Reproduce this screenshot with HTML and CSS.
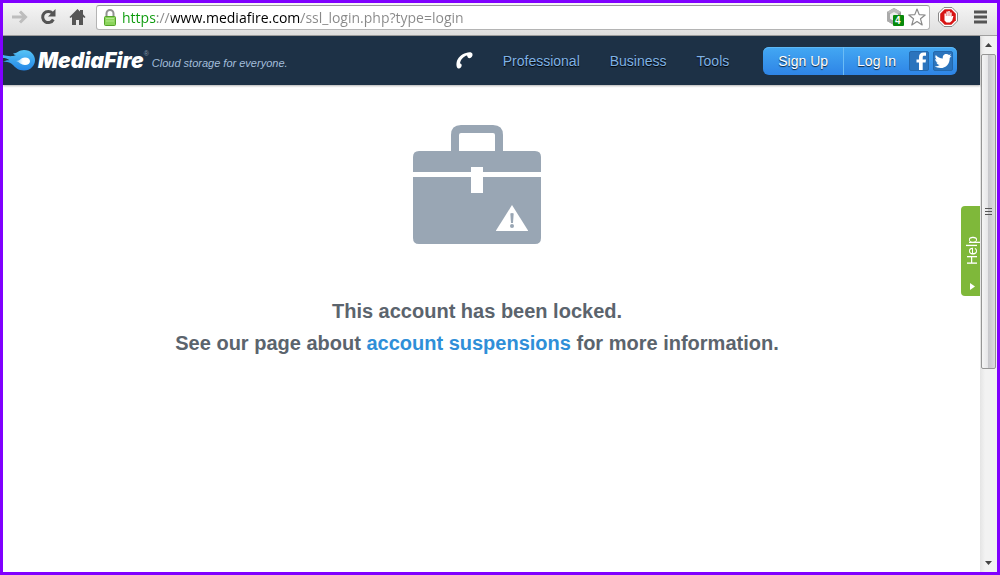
FILE: index.html
```html
<!DOCTYPE html>
<html lang="en">
<head>
  <meta charset="utf-8">
  <title>MediaFire</title>
  <link rel="stylesheet" href="styles.css">
</head>
<body>
  <div class="toolbar">
    <button class="tool" aria-label="Forward">
      <svg width="17" height="16" viewBox="0 0 17 16"><path d="M1 8h13M9 2.500l5.500 5.500L9 13.500" fill="none" stroke="#bdbdbd" stroke-width="3"/></svg>
    </button>
    <button class="tool" aria-label="Reload">
      <svg width="17" height="16" viewBox="0 0 17 16"><path d="M12.500 4.300A5.600 5.600 0 1 0 13.300 10.500" fill="none" stroke="#555" stroke-width="3"/><path d="M15.500 0v7.500H8z" fill="#555"/></svg>
    </button>
    <button class="tool" aria-label="Home">
      <svg width="17" height="16" viewBox="0 0 17 16"><path d="M8.500 0L11 2.400V1h3v4.300L16.500 8l-1 1L14 8v8h-4v-5H7v5H3V8L1.500 9l-1-1z" fill="#555"/></svg>
    </button>
    <div class="omnibox">
      <svg width="12" height="17" viewBox="0 0 12 17"><path d="M2.500 8V4.500a3.500 3.500 0 0 1 7 0V8" fill="none" stroke="#929292" stroke-width="2"/><rect x=".5" y="7.500" width="11" height="9" rx="1" fill="#8bd45c" stroke="#55a32b"/><path d="M2 9.500h8M2 12h8" stroke="#b2e88c"/></svg>
      <input class="url" type="text" aria-label="Address" value="https://www.mediafire.com/ssl_login.php?type=login">
      <button class="tool" aria-label="Site trackers">
        <svg width="18" height="18" viewBox="0 0 18 18"><path d="M8 0l7 4v9l-7 4-7-4V4z" fill="#9a9a9a"/><path d="M8 0l7 4-7 4-7-4z" fill="#bcbcbc"/><path d="M1 4l7 4v9l-7-4z" fill="#aaa"/><path d="M8 4l4 2.300v4.500L8 13l-4-2.200V6.300z" fill="#ededed"/><rect x="7" y="7" width="11" height="11" rx="1" fill="#078a0b"/><text class="count" x="9" y="16">4</text></svg>
      </button>
      <button class="tool" aria-label="Bookmark">
        <svg width="18" height="18" viewBox="0 0 18 18"><path d="M9 1l2.200 5.600 6 .4-4.700 3.800L14.200 17 9 13.500 3.800 17l1.700-6.200L.8 7l6-.4z" fill="#fff" stroke="#8b8b8b" stroke-width="1.200" stroke-linejoin="round"/></svg>
      </button>
    </div>
    <button class="tool blocker" aria-label="Ad blocker">
      <svg width="20" height="20" viewBox="0 0 20 20"><path d="M6 .5h8L19.500 6v8L14 19.500H6L.5 14V6z" fill="#fff" stroke="#888"/><path d="M6.700 2.200h6.600l4.500 4.500v6.600l-4.500 4.500H6.700l-4.500-4.500V6.700z" fill="#d71414"/><path d="M6.500 10V6.500h1.400V9h.5V4.500h1.400V9h.5V4h1.400v5h.5V5.500h1.400V10l.5-1h1.300l-1.200 4.500L12 15.500H8.500l-2-2z" fill="#fff"/></svg>
    </button>
    <button class="tool" aria-label="Menu">
      <svg width="13" height="14" viewBox="0 0 13 14"><path d="M0 2h13M0 7h13M0 12h13" stroke="#555" stroke-width="3"/></svg>
    </button>
  </div>

  <div class="viewport">
    <div class="page">
      <header class="header">
        <a class="logo" href="#">
          <svg width="32" height="22" viewBox="0 0 32 22">
            <defs>
              <linearGradient id="flame" x1="0" y1="0" x2="0" y2="1"><stop offset="0" stop-color="#57c5f6"/><stop offset="1" stop-color="#2285e7"/></linearGradient>
              <linearGradient id="core" x1="0" y1="0" x2="1" y2="0"><stop offset="0" stop-color="#7cc6f8"/><stop offset=".5" stop-color="#fff"/></linearGradient>
            </defs>
            <path d="M0 5c4 1 9 2 13 0-1 0-2-.5-3-1.500C14 3.500 16 0 21 0c7 0 11 5 11 10.200S27.500 20.500 21 20.500c-6 0-8.500-3-11-5.500-3-2.700-6-3.500-10-3 2-1.500 4-2 6.500-1.800C4.500 8.500 2 8 0 8z" fill="url(#flame)"/>
            <path d="M13 11c4 0 5-3.500 9-3.500 3 0 5 1.500 5 3.700S25 15 22 15c-4 0-5.500-3-9-4z" fill="url(#core)"/>
          </svg>
          <span class="brand">MediaFire</span><sup class="reg">®</sup>
          <span class="tagline">Cloud storage for everyone.</span>
        </a>
        <nav class="nav">
          <a href="#" aria-label="Phone">
            <svg width="17" height="17" viewBox="0 0 17 17"><path d="M10 1C13 0 16 0 16.500 2c.4 2-1 4-3 4.200-1.500 0-2-1.200-2.500-2.700C8 4 4.500 7.500 4 11.300c1.200.4 2 1.200 1.600 2.700C5 15.500 4 17 2.500 16.500.5 16 .2 13 .6 10.500 1.400 6 5.500 2 10 1z" fill="#fff"/></svg>
          </a>
          <a href="#">Professional</a>
          <a href="#">Business</a>
          <a href="#">Tools</a>
        </nav>
        <div class="account">
          <button class="signup">Sign Up</button>
          <button class="login">Log In</button>
          <button class="social" aria-label="Log in with Facebook">
            <svg width="18" height="18" viewBox="0 0 18 18"><path d="M9 18v-7.500H6.500v-3H9V5c0-3 1.700-4.500 4.500-4.500H16v3.200h-1.700c-1.200 0-1.600.5-1.600 1.500v2.300H16l-.4 3h-2.900V18z" fill="#fff"/></svg>
          </button>
          <button class="social" aria-label="Log in with Twitter">
            <svg width="18" height="18" viewBox="0 0 18 18"><path d="M17.500 4l-1.800 1.900c.2 5.600-3.700 10.100-9.200 10.100-2.200 0-4.200-.6-5.700-1.700 2 .2 3.500-.3 4.900-1.300-1.500-.1-2.800-1-3.300-2.500h1.500C2.200 10 1.200 8.700 1.200 7l1.500.4C1.300 6.300.9 4.500 1.800 2.900c1.800 2.100 4.200 3.400 7.100 3.600C8.300 4 10 2 12.300 2c1.100 0 2 .4 2.700 1.100l2.100-.8-1.400 1.900z" fill="#fff"/></svg>
          </button>
        </div>
      </header>

      <main class="notice">
        <svg class="briefcase" width="128" height="119" viewBox="0 0 128 119">
          <path d="M38 27V10Q38 0 48 0H80Q90 0 90 10V27H82V10Q82 8 80 8H48Q46 8 46 10V27z" fill="#99a6b4"/>
          <path d="M6 26h116q6 0 6 6v15H70v-5H58v5H0V32q0-6 6-6z" fill="#99a6b4"/>
          <path d="M0 52h58v16h12V52h58v61q0 6-6 6H6q-6 0-6-6z" fill="#99a6b4"/>
          <path d="M99 80l16 25.500v.5H83v-.5z" fill="#fff"/>
          <path d="M97.300 88.500q1.700-1.200 3.400 0L100 98h-2z" fill="#99a6b4"/><circle cx="99" cy="101" r="2" fill="#99a6b4"/>
        </svg>
        <p>This account has been locked.</p>
        <p>See our page about <a href="#">account suspensions</a> for more information.</p>
      </main>

      <button class="help">
        <svg width="6" height="7" viewBox="0 0 6 7"><path d="M6 0v7L1 3.500z" fill="#fff"/></svg>
        Help
      </button>
    </div>

    <div class="scrollbar" aria-hidden="true">
      <div class="arrow"><svg width="7" height="4" viewBox="0 0 7 4"><path d="M0 4L3.500 0 7 4z" fill="#444"/></svg></div>
      <div class="track"><div class="thumb"><svg width="8" height="9" viewBox="0 0 8 9"><path d="M0 1.500h7M0 4.500h7M0 7.500h7" stroke="#555"/></svg></div></div>
      <div class="arrow"><svg width="7" height="4" viewBox="0 0 7 4"><path d="M0 0L3.500 4 7 0z" fill="#444"/></svg></div>
    </div>
  </div>
</body>
</html>
```
FILE: styles.css
```css
* {
  box-sizing: border-box;
}
body {
  display: flex;
  flex-direction: column;
  min-height: 100vh;
  margin: 0;
  border: 3px solid #8000ff;
  font-family: "Liberation Sans", Arial, sans-serif;
  font-size: 14px;
  background: #fff;
}
svg {
  display: block;
  flex: none;
}
button {
  padding: 0;
  border: none;
  background: none;
  font: inherit;
  cursor: pointer;
}
a {
  text-decoration: none;
}

/* browser toolbar */
.toolbar {
  display: flex;
  align-items: center;
  gap: 12px;
  height: 33px;
  padding: 0 10px 4px 8px;
  border-bottom: 1px solid #a0a0a0;
  background: linear-gradient(#f6f6f6, #dedede);
}
.omnibox {
  display: flex;
  flex: 1;
  align-items: center;
  gap: 4px;
  height: 25px;
  margin: 0 -1px 0 -2px;
  padding: 0 3px 0 7px;
  border: 1px solid #b4b4b4;
  border-top-color: #9a9a9a;
  border-radius: 3px;
  background: #fff;
}
.url {
  flex: 1;
  min-width: 0;
  padding: 0 2px;
  border: none;
  outline: none;
  font: 14px "Open Sans", sans-serif;
  color: transparent;
  /* scheme, separator, host, path */
  background: linear-gradient(90deg, #0a9a0a 36px, #888 36px 51px, #000 51px 181px, #888 181px);
  -webkit-background-clip: text;
  background-clip: text;
}
.count {
  font: bold 10px "Liberation Sans", sans-serif;
  fill: #fff;
}
.blocker {
  margin: 0 4px 0 -3px;
}

/* page and scrollbar */
.viewport {
  display: flex;
  flex: 1;
}
.page {
  position: relative;
  flex: 1;
}
.header {
  display: flex;
  align-items: center;
  height: 49px;
  padding-right: 23px;
  background: #1d3146;
  box-shadow: 0 1px 2px rgba(0,0,0,0.3);
}
.logo {
  display: flex;
  align-items: center;
  color: #fff;
}
.brand {
  margin-left: 3px;
  font: italic 900 21px/22px Inter, sans-serif;
}
.reg {
  align-self: flex-start;
  font-size: 7px;
  line-height: 8px;
  color: #8796a8;
}
.tagline {
  margin: 5px 0 0 3px;
  font-size: 11px;
  font-style: italic;
  color: #a3bedb;
}
.nav {
  display: flex;
  flex: 1;
  align-items: center;
  justify-content: flex-end;
  gap: 30px;
}
.nav a {
  color: #7fb2e5;
  text-shadow: 0 1px 1px #000;
}
.account {
  display: flex;
  align-items: center;
  height: 28px;
  margin-left: 34px;
  padding-right: 4px;
  border-radius: 6px;
  background: linear-gradient(#43a8f3, #2e84e6);
  box-shadow: inset 0 1px 0 #5db8f6;
}
.signup,
.login {
  height: 28px;
  padding: 0 15px;
  color: #fff;
  text-shadow: 0 1px 1px #123;
}
.signup {
  border-right: 1px solid #6cbcf5;
}
.login {
  padding: 0 13px;
}
.social {
  display: flex;
  align-items: center;
  justify-content: center;
  width: 20px;
  height: 20px;
  border: 1px solid #2468ac;
  border-radius: 2px;
  background: #2b74bd;
}
.social + .social {
  margin-left: 4px;
}

.notice {
  padding: 40px 29px 0 0;
  text-align: center;
  font-size: 20px;
  font-weight: bold;
  line-height: 32px;
  color: #5b646d;
}
.notice p {
  margin: 0;
}
.notice a {
  color: #2f8fd8;
}
.briefcase {
  margin: 0 auto 51px;
}

.help {
  position: absolute;
  top: 170px;
  right: 0;
  display: flex;
  align-items: center;
  gap: 18px;
  width: 19px;
  height: 90px;
  padding: 6px 2px 6px 0;
  border-radius: 0 4px 4px 0;
  background: #7fb83a;
  color: #fff;
  writing-mode: vertical-rl;
  transform: rotate(180deg);
}
.help svg {
  margin-right: 4px;
}

.scrollbar {
  display: flex;
  flex-direction: column;
  width: 17px;
  background: linear-gradient(90deg, #e4e4e4, #f2f2f2 30%);
}
.arrow {
  display: flex;
  align-items: center;
  justify-content: center;
  height: 18px;
}
.track {
  flex: 1;
}
.thumb {
  display: flex;
  align-items: center;
  justify-content: center;
  height: 63%;
  margin: 0 1px;
  border: 1px solid #959595;
  border-radius: 2px;
  background: linear-gradient(90deg, #f5f5f5, #e6e6e8 45%, #c8c8cc 50%, #dcdcdf);
}
```
